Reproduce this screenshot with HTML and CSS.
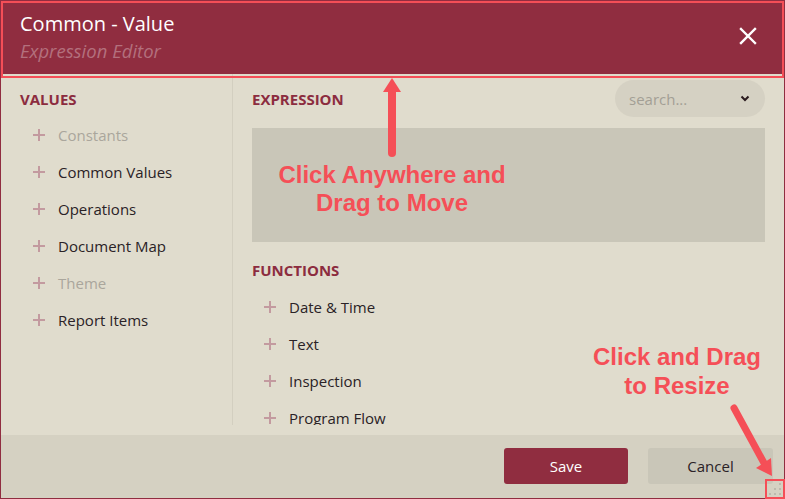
FILE: index.html
```html
<!DOCTYPE html>
<html lang="en">
<head>
  <meta charset="UTF-8" />
  <title>Expression Editor</title>
  <link rel="stylesheet" href="styles.css">
</head>
<body>
  <div class="dialog">
    <div class="header">
      <div class="titles">
        <div class="title">Common - Value</div>
        <div class="subtitle">Expression Editor</div>
      </div>
      <svg class="close" width="18" height="18" viewBox="0 0 18 18">
        <path d="M2 2 L16 16 M16 2 L2 16" stroke="#fff" stroke-width="2.4" stroke-linecap="square"/>
      </svg>
    </div>

    <div class="main">
      <div class="panes">
        <div class="values">
          <div class="heading">VALUES</div>
          <ul class="tree">
            <li class="disabled"><span class="plus"></span>Constants</li>
            <li><span class="plus"></span>Common Values</li>
            <li><span class="plus"></span>Operations</li>
            <li><span class="plus"></span>Document Map</li>
            <li class="disabled"><span class="plus"></span>Theme</li>
            <li><span class="plus"></span>Report Items</li>
          </ul>
        </div>
        <div class="editor">
          <div class="editor-top">
            <div class="heading">EXPRESSION</div>
            <div class="search">
              <span>search...</span>
              <svg width="10" height="7" viewBox="0 0 10 7">
                <path d="M1.5 1.5 L5 5 L8.5 1.5" fill="none" stroke="#2a1a1e" stroke-width="2"/>
              </svg>
            </div>
          </div>
          <div class="expression"></div>
          <div class="heading functions">FUNCTIONS</div>
          <ul class="tree">
            <li><span class="plus"></span>Date &amp; Time</li>
            <li><span class="plus"></span>Text</li>
            <li><span class="plus"></span>Inspection</li>
            <li><span class="plus"></span>Program Flow</li>
          </ul>
        </div>
      </div>
    </div>

    <div class="footer">
      <button class="btn btn-save">Save</button>
      <button class="btn btn-cancel">Cancel</button>
    </div>

    <svg class="grip" width="16" height="14" viewBox="0 0 16 14">
      <rect x="12" y="1" width="2" height="2" fill="#bdb9ad"/>
      <rect x="7" y="6" width="2" height="2" fill="#bdb9ad"/>
      <rect x="12" y="6" width="2" height="2" fill="#bdb9ad"/>
      <rect x="2" y="11" width="2" height="2" fill="#bdb9ad"/>
      <rect x="7" y="11" width="2" height="2" fill="#bdb9ad"/>
      <rect x="12" y="11" width="2" height="2" fill="#bdb9ad"/>
    </svg>
  </div>

  <!-- annotations drawn over the screenshot -->
  <div class="mark mark-header"></div>
  <div class="mark mark-grip"></div>
  <svg class="arrows" width="785" height="499" viewBox="0 0 785 499">
    <line x1="392" y1="153" x2="392" y2="88" stroke="#f54f57" stroke-width="8" stroke-linecap="round"/>
    <polygon points="383,92 392,78 401,92" fill="#f54f57"/>
    <line x1="734" y1="408" x2="764" y2="463" stroke="#f54f57" stroke-width="7" stroke-linecap="round"/>
    <polygon points="756,468 772,476 771,458" fill="#f54f57"/>
  </svg>
  <div class="note note-move">Click Anywhere and<br>Drag to Move</div>
  <div class="note note-resize">Click and Drag<br>to Resize</div>
</body>
</html>
```

FILE: styles.css
```css
* {
  box-sizing: border-box;
}

body {
  margin: 0;
  width: 785px;
  height: 499px;
  overflow: hidden;
  font-family: 'Open Sans', sans-serif;
  background: #e0dccd;
}

ul {
  list-style: none;
  margin: 0;
  padding: 0;
}

.dialog {
  width: 785px;
  height: 499px;
  border: 1px solid #902d40;
  border-top: none;
  background: #e0dccd;
  display: flex;
  flex-direction: column;
}

.header {
  height: 74px;
  background: #902d40;
  padding: 11px 27px 0 19px;
  display: flex;
  justify-content: space-between;
  align-items: flex-start;
  flex-shrink: 0;
}

.title {
  color: #fff;
  font-size: 20px;
  line-height: 26px;
}

.subtitle {
  color: #b3707d;
  font-size: 18.5px;
  font-style: italic;
  line-height: 28px;
}

.close {
  margin-top: 16px;
}

.main {
  flex: 1;
  padding-bottom: 10px;
  min-height: 0;
}

.panes {
  height: 100%;
  display: flex;
  overflow: hidden;
}

.values {
  width: 232px;
  border-right: 1px solid #d3cfc0;
  padding: 15px 19px 0;
}

.editor {
  flex: 1;
  padding: 6px 19px 0;
}

.heading {
  color: #8c2c3f;
  font-weight: bold;
  font-size: 15px;
  line-height: 20px;
}

.tree {
  margin-top: 7px;
}

.tree li {
  height: 37px;
  display: flex;
  align-items: center;
  font-size: 15px;
  color: #2a2226;
  padding-left: 13px;
}

.tree li.disabled {
  color: #aaa69c;
}

.plus {
  width: 12px;
  height: 12px;
  margin-right: 13px;
  position: relative;
  flex-shrink: 0;
}

.plus::before,
.plus::after {
  content: "";
  position: absolute;
  background: #c39a9f;
}

.plus::before {
  left: 0;
  top: 5px;
  width: 12px;
  height: 2px;
}

.plus::after {
  left: 5px;
  top: 0;
  width: 2px;
  height: 12px;
}

.editor-top {
  display: flex;
  justify-content: space-between;
  align-items: center;
  height: 37px;
}

.search {
  width: 150px;
  height: 37px;
  border-radius: 19px;
  background: #d5d1c3;
  display: flex;
  justify-content: space-between;
  align-items: center;
  padding: 0 15px 0 14px;
  color: #a39f95;
  font-size: 15px;
}

.expression {
  margin-top: 11px;
  height: 114px;
  background: #c9c6b8;
}

.functions {
  margin-top: 18px;
}

.editor .tree {
  margin-top: 8px;
}

.editor .tree li {
  height: 37px;
  padding-left: 12px;
}

.footer {
  height: 63px;
  background: #d5d1c2;
  flex-shrink: 0;
  display: flex;
  justify-content: flex-end;
  align-items: flex-start;
  gap: 20px;
  padding: 13px 11px 0 0;
}

.btn {
  height: 36px;
  border: none;
  border-radius: 3px;
  font-family: 'Open Sans', sans-serif;
  font-size: 15px;
}

.btn-save {
  width: 124px;
  background: #902d40;
  color: #fff;
}

.btn-cancel {
  width: 125px;
  background: #c9c6b8;
  color: #2a2226;
}

.grip {
  position: absolute;
  left: 767px;
  top: 482px;
}

.mark {
  position: absolute;
  border: 2px solid #f54e57;
}

.mark-header {
  left: 1px;
  top: 1px;
  width: 783px;
  height: 77px;
}

.mark-grip {
  left: 765px;
  top: 479px;
  width: 20px;
  height: 20px;
}

.arrows {
  position: absolute;
  left: 0;
  top: 0;
}

.note {
  position: absolute;
  color: #f54f57;
  font-family: 'Liberation Sans', Arial, sans-serif;
  font-weight: bold;
  font-size: 24px;
  line-height: 28px;
  text-align: center;
}

.note-move {
  left: 262px;
  top: 161px;
  width: 260px;
}

.note-resize {
  left: 567px;
  top: 342px;
  width: 220px;
  line-height: 29px;
}
```
